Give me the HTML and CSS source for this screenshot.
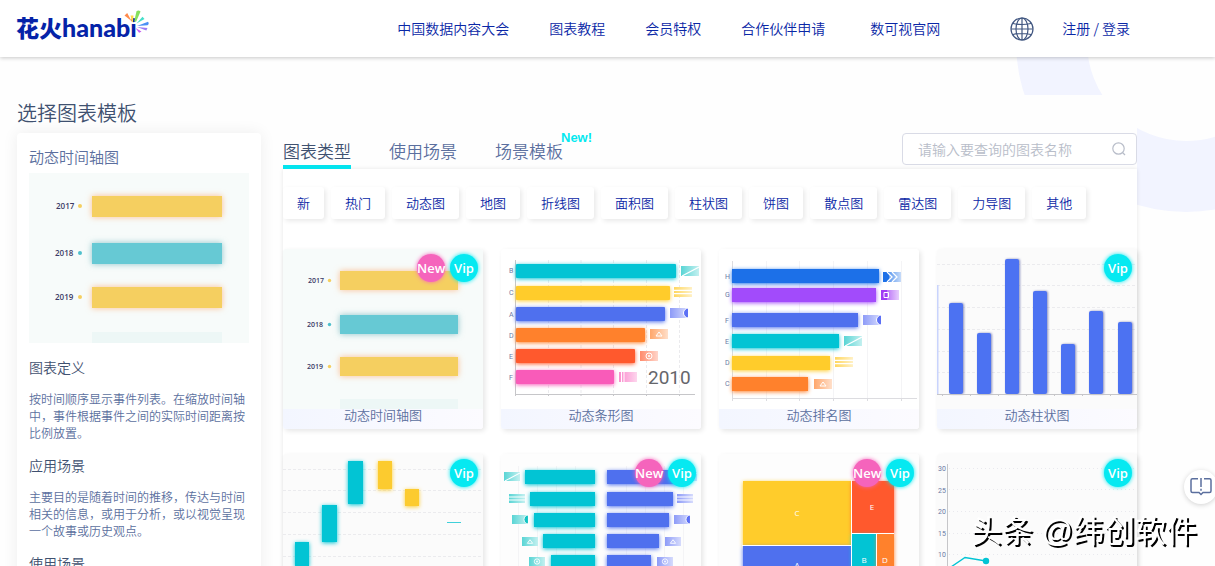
FILE: index.html
```html
<!DOCTYPE html>
<html lang="zh-CN">
<head>
<meta charset="utf-8">
<title>花火hanabi</title>
<link rel="stylesheet" href="styles.css">
</head>
<body>
<svg class="defs" aria-hidden="true">
  <defs>
    <linearGradient id="fade" x1="0" y1="0" x2="1" y2="0"><stop offset="0" stop-color="#fff" stop-opacity=".3"/><stop offset="1" stop-color="#fff" stop-opacity=".75"/></linearGradient>
    <symbol id="f-slash" viewBox="0 0 18 10"><path fill="currentColor" d="M0 0h18v10H0z"/><path fill="url(#fade)" d="M0 0h18v10H0z"/><path d="M1 10L18 1" stroke="#fff" stroke-width="1.2"/></symbol>
    <symbol id="f-lines" viewBox="0 0 18 10"><path fill="currentColor" d="M0 0h18v10H0z"/><path fill="url(#fade)" d="M0 0h18v10H0z"/><path d="M0 3.3h18M0 6.7h18" stroke="#fff" stroke-width="1.2"/></symbol>
    <symbol id="f-moon" viewBox="0 0 18 10"><path fill="currentColor" d="M0 0h18v10H0z"/><path fill="url(#fade)" d="M0 0h18v10H0z"/><path fill="currentColor" stroke="#fff" d="M18.500 0a5 5 0 0 0 0 10z"/></symbol>
    <symbol id="f-tri" viewBox="0 0 18 10"><path fill="currentColor" d="M0 0h18v10H0z"/><path fill="url(#fade)" d="M0 0h18v10H0z"/><path d="M9 3L12 7H6z" fill="none" stroke="#fff"/></symbol>
    <symbol id="f-coin" viewBox="0 0 18 10"><path fill="currentColor" d="M0 0h18v10H0z"/><path fill="url(#fade)" d="M0 0h18v10H0z"/><circle cx="9" cy="5" r="3" fill="none" stroke="#fff"/><circle cx="9" cy="5" r="1" fill="#fff"/></symbol>
    <symbol id="f-stripes" viewBox="0 0 18 10"><path fill="currentColor" d="M0 0h18v10H0z"/><path fill="url(#fade)" d="M0 0h18v10H0z"/><path d="M2.500 0v10M5 0v10" stroke="#fff"/></symbol>
    <symbol id="f-arrows" viewBox="0 0 18 10"><path fill="currentColor" d="M0 0h18v10H0z"/><path fill="url(#fade)" d="M6 0h12v10H6z"/><path d="M4 0l5 5-5 5M9 0l5 5-5 5" fill="none" stroke="#fff" stroke-width="1.3"/></symbol>
    <symbol id="f-square" viewBox="0 0 18 10"><path fill="currentColor" d="M0 0h18v10H0z"/><path fill="url(#fade)" d="M6 0h12v10H6z"/><path d="M3 2.500h4.500v5H3z" fill="none" stroke="#fff"/></symbol>
  </defs>
</svg>

<div class="page">
  <div class="ring" aria-hidden="true"></div>

  <header class="header">
    <a class="logo" href="#"><span class="logo-cn">花火</span><span class="logo-en">hanabi</span>
      <svg class="spark" viewBox="0 0 26 24" aria-hidden="true">
        <path fill="#ff8a4c" d="M1.500 5.500L4.200 3 8.500 11z"/>
        <path fill="#ffd84a" d="M7.500 5.500h3L10 12H9z"/>
        <path fill="#86e05c" d="M13.500 1.200Q15.500-.5 17.500 1.500L13.200 11.500h-2z"/>
        <path fill="#45dfc9" d="M19.500 6.800L21.500 9l-8 4.500z"/>
        <path fill="#4a90f5" d="M25 11.800q1.500 2-.5 3.400L14 16z"/>
        <path fill="#9a7bf5" d="M24.500 18l-1.200 2.600L14 17z"/>
        <path fill="#c45cf2" d="M18.500 21.500l-2.400 1.200L12.500 18z"/>
      </svg>
    </a>
    <nav class="nav">
      <a href="#">中国数据内容大会</a>
      <a href="#">图表教程</a>
      <a href="#">会员特权</a>
      <a href="#">合作伙伴申请</a>
      <a class="nav-site" href="#">数可视官网</a>
    </nav>
    <button class="globe" type="button" aria-label="语言">
      <svg viewBox="0 0 24 24" fill="none" stroke="#405680" stroke-width="1.200"><circle cx="12" cy="12" r="11"/><ellipse cx="12" cy="12" rx="6" ry="11"/><path d="M12 1v22M1 12h22M3 6.500q9 2 18 0M3 17.500q9-2 18 0"/></svg>
    </button>
    <a class="login" href="#">注册 / 登录</a>
  </header>

  <main class="main">
    <h1 class="title">选择图表模板</h1>
    <div class="columns">
      <aside class="side">
        <h2 class="side-title">动态时间轴图</h2>
        <svg class="preview" viewBox="0 0 220 170" role="img" aria-label="动态时间轴图">
          <rect width="220" height="170" fill="#f7fbfa"/>
          <g class="glow-warm" fill="#f5cf60"><rect x="63" y="23" width="130" height="21"/><rect x="63" y="114" width="130" height="21"/></g>
          <rect class="glow-cool" x="63" y="70" width="130" height="21" fill="#66c9d4"/>
          <rect x="63" y="159" width="130" height="11" fill="#edf7f6"/>
          <g class="year year-lg"><text x="27" y="36">2017</text><text x="26" y="83">2018</text><text x="26" y="127">2019</text></g>
          <circle cx="51" cy="33" r="2" fill="#f5cf60"/><circle cx="51" cy="80" r="2" fill="#4fc0cc"/><circle cx="51" cy="124" r="2" fill="#f5cf60"/>
        </svg>
        <h3>图表定义</h3>
        <p>按时间顺序显示事件列表。在缩放时间轴中，事件根据事件之间的实际时间距离按比例放置。</p>
        <h3>应用场景</h3>
        <p>主要目的是随着时间的推移，传达与时间相关的信息，或用于分析，或以视觉呈现一个故事或历史观点。</p>
        <h3>使用场景</h3>
      </aside>

      <section class="content">
        <div class="toolbar">
          <div class="tabs">
            <button class="tab active" type="button">图表类型</button>
            <button class="tab" type="button">使用场景</button>
            <button class="tab" type="button">场景模板<span class="tab-new">New!</span></button>
          </div>
          <label class="search">
            <input type="text" placeholder="请输入要查询的图表名称" aria-label="请输入要查询的图表名称">
            <svg viewBox="0 0 14 14" fill="none" stroke="#b8bdc9" stroke-width="1.200"><circle cx="6.500" cy="6.500" r="5.700"/><path d="M10.500 10.500l2.500 2.500"/></svg>
          </label>
        </div>

        <div class="panel">
          <div class="pills">
            <button type="button">新</button><button type="button">热门</button><button type="button">动态图</button><button type="button">地图</button><button type="button">折线图</button><button type="button">面积图</button><button type="button">柱状图</button><button type="button">饼图</button><button type="button">散点图</button><button type="button">雷达图</button><button type="button">力导图</button><button type="button">其他</button>
          </div>

          <div class="grid">
            <a class="card" href="#">
              <svg viewBox="0 0 200 160" aria-hidden="true">
                <rect width="200" height="160" fill="#f7fbfa"/>
                <g class="glow-warm" fill="#f5cf60"><rect x="57" y="22" width="118" height="19"/><rect x="57" y="108" width="118" height="19"/></g>
                <rect class="glow-cool" x="57" y="66" width="118" height="19" fill="#66c9d4"/>
                <rect x="57" y="150" width="118" height="10" fill="#edf7f6"/>
                <g class="year"><text x="25" y="34">2017</text><text x="24" y="78">2018</text><text x="24" y="120">2019</text></g>
                <circle cx="46.500" cy="31.500" r="1.700" fill="#f5cf60"/><circle cx="46.500" cy="75.500" r="1.700" fill="#4fc0cc"/><circle cx="46.500" cy="117.500" r="1.700" fill="#f5cf60"/>
              </svg>
              <span class="badges"><b class="new">New</b><b class="vip">Vip</b></span>
              <span class="name">动态时间轴图</span>
            </a>

            <a class="card" href="#">
              <svg viewBox="0 0 200 160" aria-hidden="true">
                <path class="dash" d="M47.500 11v134M80 11v134M112.500 11v134M145.500 11v134M178.500 11v134"/>
                <path class="axis" d="M14.500 11v136M14 145.500h180M47.500 145v2M80 145v2M112.500 145v2M145.500 145v2M178.500 145v2"/>
                <g class="bars">
                  <rect x="15" y="15" width="160" height="14" rx="1" fill="#02c4d4" color="#02c4d4"/>
                  <rect x="15" y="37" width="154" height="14" rx="1" fill="#ffcc2b" color="#ffcc2b"/>
                  <rect x="15" y="58" width="149" height="14" rx="1" fill="#4f70ee" color="#4f70ee"/>
                  <rect x="15" y="79" width="129" height="14" rx="1" fill="#ff812c" color="#ff812c"/>
                  <rect x="15" y="100" width="119" height="14" rx="1" fill="#ff592d" color="#ff592d"/>
                  <rect x="15" y="121" width="98" height="14" rx="1" fill="#f95bb9" color="#f95bb9"/>
                </g>
                <use href="#f-slash" x="180" y="17" width="18" height="10" color="#12c3c3"/>
                <use href="#f-lines" x="173" y="38" width="18" height="10" color="#ffc61a"/>
                <use href="#f-moon" x="169" y="59" width="18" height="10" color="#5c70f5"/>
                <use href="#f-tri" x="149" y="80" width="18" height="10" color="#ff812c"/>
                <use href="#f-coin" x="139" y="102" width="18" height="10" color="#ff592d"/>
                <use href="#f-stripes" x="118" y="123" width="18" height="10" color="#f95bb9"/>
                <g class="tick"><text x="8" y="24">B</text><text x="8" y="46">C</text><text x="8" y="68">A</text><text x="8" y="89">D</text><text x="8" y="110">E</text><text x="8" y="131">F</text></g>
                <text class="big-year" x="147" y="135">2010</text>
              </svg>
              <span class="name">动态条形图</span>
            </a>

            <a class="card" href="#">
              <svg viewBox="0 0 200 160" aria-hidden="true">
                <path class="gridline" d="M47.500 12v138M80.500 12v138M114.500 12v138M148.500 12v138M182.500 12v138"/>
                <path class="axis light" d="M13.500 12v140M13 149.500h185M47.500 149v3M80.500 149v3M114.500 149v3M148.500 149v3M182.500 149v3"/>
                <g class="bars">
                  <rect x="13" y="20" width="147" height="14" fill="#1c70e8" color="#1c70e8"/>
                  <rect x="13" y="39" width="144" height="14" fill="#a24bfb" color="#a24bfb"/>
                  <rect x="13" y="64" width="126" height="14" fill="#4f70ee" color="#4f70ee"/>
                  <rect x="13" y="85" width="107" height="14" fill="#02c4d4" color="#02c4d4"/>
                  <rect x="13" y="107" width="98" height="14" fill="#ffcc2b" color="#ffcc2b"/>
                  <rect x="13" y="128" width="76" height="14" fill="#ff812c" color="#ff812c"/>
                </g>
                <use href="#f-arrows" x="164" y="23" width="18" height="10" color="#1c70e8"/>
                <use href="#f-square" x="162" y="41" width="18" height="10" color="#a03bf5"/>
                <use href="#f-moon" x="144" y="66" width="18" height="10" color="#5c70f5"/>
                <use href="#f-slash" x="125" y="87" width="18" height="10" color="#12c3c3"/>
                <use href="#f-lines" x="116" y="108" width="18" height="10" color="#ffc61a"/>
                <use href="#f-tri" x="95" y="130" width="18" height="10" color="#ff812c"/>
                <g class="tick"><text x="6" y="30">H</text><text x="6" y="48">G</text><text x="6" y="74">F</text><text x="6" y="95">E</text><text x="6" y="116">D</text><text x="6" y="137">C</text></g>
              </svg>
              <span class="name">动态排名图</span>
            </a>

            <a class="card" href="#">
              <svg viewBox="0 0 200 160" aria-hidden="true">
                <rect width="200" height="160" fill="#fbfbfb"/>
                <path class="dash" d="M0 15.500h200M0 36.500h200M0 58.500h200M0 80.500h200M0 102.500h200M0 123.500h200"/>
                <path fill="#c9d4fd" d="M0 36h1.500v109H0z"/>
                <g class="columns-blue">
                  <rect x="12" y="54" width="14" height="91" rx="2"/><rect x="40" y="84" width="14" height="61" rx="2"/><rect x="68" y="10" width="14" height="135" rx="2"/><rect x="96" y="42" width="14" height="103" rx="2"/><rect x="124" y="95" width="14" height="50" rx="2"/><rect x="152" y="62" width="14" height="83" rx="2"/><rect x="181" y="73" width="14" height="72" rx="2"/>
                </g>
                <path class="axis" d="M0 145.500h200M5.500 145v2M33.500 145v2M61.500 145v2M89.500 145v2M117.500 145v2M145.500 145v2M173.500 145v2"/>
              </svg>
              <span class="badges"><b class="vip">Vip</b></span>
              <span class="name">动态柱状图</span>
            </a>

            <a class="card" href="#">
              <svg viewBox="0 0 200 160" aria-hidden="true">
                <rect width="200" height="160" fill="#fbfbfb"/>
                <path class="dash" d="M0 15.500h200M0 36.500h200M0 58.500h200M0 80.500h200M0 102.500h200M0 123.500h200"/>
                <g class="bars">
                  <g fill="#02c4d4" color="#02c4d4"><rect x="12" y="88" width="14" height="24"/><rect x="39" y="51" width="15" height="37"/><rect x="65" y="7" width="15" height="43"/></g>
                  <g fill="#fccb2f" color="#fccb2f"><rect x="95" y="7" width="14" height="28"/><rect x="122" y="35" width="14" height="17"/></g>
                </g>
                <path d="M164 68.500h14" stroke="#3fd0da"/>
              </svg>
              <span class="badges"><b class="vip">Vip</b></span>
            </a>

            <a class="card" href="#">
              <svg viewBox="0 0 200 160" aria-hidden="true">
                <rect width="200" height="160" fill="#fdfdfd"/>
                <path class="gridline" d="M17.500 12v138M36.500 12v138M55.500 12v138M74.500 12v138M125.500 12v138M144.500 12v138M163.500 12v138M182.500 12v138"/>
                <g class="bars">
                  <g fill="#02c4d4" color="#02c4d4"><rect x="24" y="16" width="70" height="14"/><rect x="29" y="38" width="65" height="14"/><rect x="33" y="59" width="61" height="14"/><rect x="42" y="80" width="52" height="14"/><rect x="50" y="101" width="44" height="14"/></g>
                  <g fill="#4f70ee" color="#4f70ee"><rect x="106" y="16" width="70" height="14"/><rect x="106" y="38" width="66" height="14"/><rect x="106" y="59" width="62" height="14"/><rect x="106" y="80" width="52" height="14"/><rect x="106" y="101" width="44" height="14"/></g>
                </g>
                <g color="#12c3c3"><use href="#f-slash" x="3" y="18" width="16" height="9"/><use href="#f-lines" x="8" y="40" width="16" height="9"/><use href="#f-moon" x="11" y="61" width="16" height="9"/><use href="#f-tri" x="21" y="83" width="16" height="9"/><use href="#f-coin" x="28" y="103" width="16" height="9"/></g>
                <g color="#5c70f5"><use href="#f-slash" x="180" y="18" width="16" height="9"/><use href="#f-lines" x="176" y="40" width="16" height="9"/><use href="#f-moon" x="173" y="61" width="16" height="9"/><use href="#f-tri" x="164" y="83" width="16" height="9"/><use href="#f-coin" x="156" y="103" width="16" height="9"/></g>
              </svg>
              <span class="badges"><b class="new">New</b><b class="vip">Vip</b></span>
            </a>

            <a class="card" href="#">
              <svg viewBox="0 0 200 160" aria-hidden="true">
                <rect width="200" height="160" fill="#fdfdfd"/>
                <g class="bars">
                  <rect x="24" y="27" width="108" height="64" fill="#ffcc2b" color="#ffcc2b"/>
                  <rect x="133" y="27" width="42" height="52" fill="#ff592d" color="#ff592d"/>
                  <rect x="24" y="92" width="108" height="60" fill="#4f70ee" color="#4f70ee"/>
                  <rect x="133" y="80" width="24" height="72" fill="#02c4d4" color="#02c4d4"/>
                  <rect x="158" y="80" width="17" height="72" fill="#ff812c" color="#ff812c"/>
                </g>
                <path d="M23 91.500h109.500M132.500 26v126M132 79.500h43M157.500 80v72" stroke="#fff"/>
                <g class="cell"><text x="78" y="62">C</text><text x="153" y="56">E</text><text x="78" y="114">A</text><text x="145" y="109">B</text><text x="166" y="109">D</text></g>
              </svg>
              <span class="badges"><b class="new">New</b><b class="vip">Vip</b></span>
            </a>

            <a class="card" href="#">
              <svg viewBox="0 0 200 160" aria-hidden="true">
                <rect width="200" height="160" fill="#fbfbfb"/>
                <path class="dots" d="M12 14.500h188M12 35.500h188M12 57.500h188M12 79.500h188M12 100.500h188"/>
                <path class="axis" d="M10.500 10v140"/>
                <g class="tick"><text x="1" y="17">30</text><text x="1" y="39">25</text><text x="1" y="60">20</text><text x="1" y="82">15</text><text x="1" y="103">10</text></g>
                <path d="M11 115L28 103.500 49 107" fill="none" stroke="#02c4d4" stroke-width="1.500"/><circle cx="49" cy="107" r="3.200" fill="#02c4d4"/>
              </svg>
              <span class="badges"><b class="vip">Vip</b></span>
            </a>
          </div>
        </div>
      </section>
    </div>
  </main>
</div>

<button class="feedback" type="button" aria-label="反馈">
  <svg viewBox="0 0 22 20" fill="none" stroke="#5b6f9e" stroke-width="1.500"><path d="M8 1.700H2.500Q1 1.700 1 3.200V14q0 1.500 1.500 1.500H9l2 2 2-2h6.500q1.500 0 1.500-1.500V3.200q0-1.500-1.500-1.500H14M11 1v9M11 11.800v2"/></svg>
</button>
<div class="watermark">头条 @纬创软件</div>
</body>
</html>
```
FILE: styles.css
```css
* { box-sizing: border-box; }

html { scrollbar-width: none; }

body {
  margin: 0;
  font-family: "Noto Sans CJK SC", "Noto Sans", sans-serif;
  font-size: 14px;
  font-weight: 350;
  color: #3f5170;
  background: #fff;
}

a { color: inherit; text-decoration: none; }
button { border: 0; padding: 0; background: none; font: inherit; color: inherit; cursor: pointer; }
h1, h2, h3, p { margin: 0; font-weight: inherit; }
svg { display: block; }
.defs { position: absolute; width: 0; height: 0; }

.page { position: relative; min-height: 100vh; overflow: clip; background: #fefefe; }

.ring {
  position: absolute;
  top: -128px;
  right: -141px;
  width: 340px;
  height: 340px;
  border: 71px solid #f2f4ff;
  border-radius: 50%;
}

/* Header */
.header {
  position: relative;
  z-index: 1;
  display: flex;
  align-items: center;
  height: 57px;
  padding: 0 85px 0 16px;
  background: #fff;
  box-shadow: 0 1px 4px rgba(0, 0, 0, .22);
  color: #0a27a6;
}
.logo { position: relative; display: flex; align-items: center; padding-bottom: 4px; color: #0523a8; line-height: 30px; }
.logo-cn { font-size: 23px; font-weight: 900; }
.logo-en { font-family: Lato, sans-serif; font-size: 25px; font-weight: 900; }
.spark { position: absolute; left: 107px; top: -2px; width: 26px; height: 24px; }
.nav { display: flex; gap: 40px; margin-left: auto; padding-bottom: 2px; }
.nav-site { margin-left: 5px; }
.login { padding-bottom: 2px; }
.globe { width: 24px; height: 24px; margin: 0 28px 0 70px; }

/* Layout */
.main { position: relative; margin: 38px 78px 0 0; padding-left: 17px; background: #fefefe; }
.title { padding-top: 2px; margin-bottom: 4px; font-size: 20px; line-height: 32px; }
.columns { display: grid; grid-template-columns: 244px 1fr; gap: 22px; }

.side {
  padding: 12px;
  border-radius: 4px;
  background: #fff;
  box-shadow: 0 0 16px rgba(0, 0, 0, .07);
}
.side-title { margin-bottom: 4px; font-size: 15px; line-height: 24px; color: #5b6f9e; }
.preview { width: 100%; }
.side h3 { margin: 14px 0 13px; font-size: 14px; line-height: 20px; }
.side p { font-size: 12px; line-height: 17px; color: #5b6f9e; }

/* Tabs and search */
.toolbar { display: flex; justify-content: space-between; height: 36px; }
.tabs { display: flex; gap: 38px; }
.tab { position: relative; height: 36px; padding-top: 4px; font-size: 17px; line-height: 28px; border-bottom: 4px solid transparent; color: #5b6f9e; }
.tab.active { border-bottom-color: #04e4ee; color: #3f5170; }
.tab-new { position: absolute; left: 66px; top: -2px; font-family: "Liberation Sans", sans-serif; font-size: 13px; font-weight: 700; line-height: 14px; color: #04e9f0; }
.search {
  display: flex;
  align-items: center;
  width: 235px;
  height: 32px;
  padding: 0 10px 0 15px;
  border: 1px solid #d9dbe6;
  border-radius: 4px;
  background: #fff;
}
.search input { flex: 1; min-width: 0; padding: 0; border: 0; outline: 0; background: none; font: inherit; }
.search input::placeholder { color: #b8bdc9; }
.search svg { width: 14px; height: 14px; }

.panel { padding-top: 18px; background: #fff; box-shadow: 0 0 4px rgba(0, 0, 0, .1); }
.pills { display: flex; flex-wrap: wrap; gap: 7px; margin-bottom: 30px; }
.pills button {
  height: 32px;
  padding: 0 14px 2px;
  border-radius: 3px;
  background: #fff;
  box-shadow: 2px 2px 5px rgba(0, 0, 0, .09);
  font-size: 13px;
  color: #0a27a6;
}

/* Template cards */
.grid { display: grid; grid-template-columns: repeat(4, 1fr); gap: 25px 18px; }
.card {
  position: relative;
  overflow: hidden;
  border-radius: 3px;
  background: #fff;
  box-shadow: 2px 2px 5px rgba(0, 0, 0, .1);
}
.card > svg { width: 100%; }
.name {
  display: block;
  height: 20px;
  font-size: 13px;
  line-height: 12px;
  text-align: center;
  color: #5b6f9e;
  background: linear-gradient(90deg, #f3f6ff, #fcfbff);
}
.badges { position: absolute; top: 5px; right: 5px; display: flex; gap: 5px; }
.badges b {
  width: 28px;
  height: 28px;
  border-radius: 50%;
  font-family: "Open Sans", sans-serif;
  font-size: 13px;
  font-weight: 600;
  line-height: 28px;
  text-align: center;
  color: #fff;
}
.new { background: #f564bc; box-shadow: 0 0 4px #f564bc; }
.vip { background: #06e9f1; box-shadow: 0 0 4px #06e9f1; }

/* Chart drawings */
.bars rect { filter: drop-shadow(0 1px 2px currentColor); }
.columns-blue { fill: #4c72f2; }
.columns-blue rect { filter: drop-shadow(1px 0 1px rgba(60, 70, 150, .6)); }
.glow-warm rect { filter: drop-shadow(0 0 3px rgba(255, 140, 60, .55)); }
.glow-cool { filter: drop-shadow(0 0 3px rgba(50, 150, 160, .55)); }
.axis { fill: none; stroke: #c6c6c9; }
.axis.light { stroke: #dcdce0; }
.gridline { fill: none; stroke: #f4f4f6; }
.dash { fill: none; stroke: #ebebee; stroke-dasharray: 3 2; }
.dots { fill: none; stroke: #e9e9ee; stroke-dasharray: 1 3; }
.year { font-family: "Open Sans", sans-serif; font-size: 7px; font-weight: 600; fill: #3b3a66; }
.year-lg { font-size: 8px; }
.tick { font-family: Roboto, sans-serif; font-size: 7px; font-weight: 400; fill: #6a7aa5; }
.big-year { font-family: Roboto, sans-serif; font-size: 19px; font-weight: 400; fill: #65666b; }
.cell { font-family: "Open Sans", sans-serif; font-size: 8px; font-weight: 400; fill: #fff; text-anchor: middle; }

/* Floating items */
.feedback {
  position: fixed;
  z-index: 2;
  right: -3px;
  bottom: 62px;
  display: flex;
  align-items: center;
  justify-content: center;
  width: 34px;
  height: 34px;
  border-radius: 50%;
  background: #fff;
  box-shadow: 0 1px 5px rgba(0, 0, 0, .18);
}
.feedback svg { width: 22px; height: 20px; }
.watermark {
  position: fixed;
  z-index: 2;
  right: 18px;
  bottom: 12px;
  font-family: "Liberation Sans", "Noto Sans CJK SC", sans-serif;
  font-size: 31px;
  font-weight: 400;
  line-height: 44px;
  color: #fff;
  text-shadow: 2px 2px 0 #000;
}
```
